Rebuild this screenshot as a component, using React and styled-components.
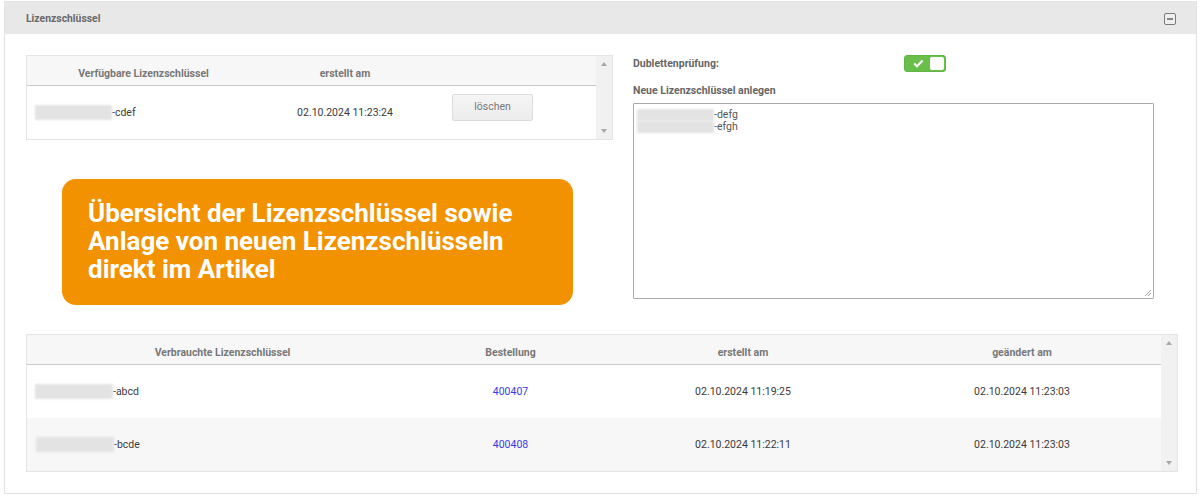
import React from "react";
import styled, { createGlobalStyle } from "styled-components";

const GlobalStyle = createGlobalStyle`
  html, body { margin: 0; padding: 0; background: #ffffff; }
  body { font-family: Roboto, "Liberation Sans", Arial, sans-serif; color: #333; }
`;

const Panel = styled.section`
  margin: 1px 3px 0 4px;
  border: 1px solid #e2e2e2;
  background: #fff;
`;

const PanelHeader = styled.header`
  height: 32px;
  background: #e8e8e8;
  display: flex;
  align-items: center;
  justify-content: space-between;
  padding: 0 20px 0 21px;
`;

const PanelTitle = styled.h2`
  margin: 0;
  font-size: 10.4px;
  font-weight: 700;
  color: #6a6a6a;
`;

const CollapseButton = styled.button`
  width: 12px;
  height: 12px;
  padding: 0;
  border: none;
  background: none;
  display: flex;
  margin-top: 1px;
`;

const PanelBody = styled.div`
  padding: 21px 20px 21px 21px;
`;

const TopRow = styled.div`
  display: flex;
  gap: 22px;
  align-items: flex-start;
`;

const LeftCol = styled.div`
  width: 585px;
  display: flex;
  flex-direction: column;
`;

const RightCol = styled.div`
  width: 521px;
  display: flex;
  flex-direction: column;
`;

const TableBox = styled.div`
  border: 1px solid #e4e4e4;
  display: flex;
  width: ${(p) => p.$width}px;
  margin-top: ${(p) => p.$mt || 0}px;
`;

const TableGrid = styled.div`
  flex: 1;
  display: grid;
  grid-template-columns: ${(p) => p.$cols};
  grid-auto-rows: 53px;
  grid-template-rows: 30px;
`;

const HeadCell = styled.div`
  box-sizing: border-box;
  background: #f7f7f7;
  border-bottom: 1px solid #c9c9c9;
  display: flex;
  align-items: center;
  justify-content: center;
  font-size: 10.5px;
  font-weight: 700;
  color: #777;
  padding-top: 5px;
`;

const Cell = styled.div`
  display: flex;
  align-items: center;
  justify-content: ${(p) => (p.$align === "left" ? "flex-start" : "center")};
  padding-left: ${(p) => p.$pl || 0}px;
  font-size: 10.5px;
  color: #3a3a3a;
  background: ${(p) => (p.$alt ? "#f7f7f7" : "#ffffff")};
`;

const BlurKey = styled.span`
  display: inline-block;
  width: ${(p) => p.$w || 77}px;
  height: ${(p) => p.$h || 15}px;
  background: #e3e3e3;
  filter: blur(1.2px);
  margin-left: ${(p) => p.$ml || 0}px;
`;

const OrderLink = styled.a`
  color: #3a3ae6;
  text-decoration: none;
  font-size: 10.5px;
`;

const DeleteButton = styled.button`
  width: 81px;
  height: 27px;
  margin-bottom: 10px;
  border: 1px solid #dcdcdc;
  border-radius: 2px;
  background: linear-gradient(#f5f5f5, #ececec);
  font-family: Roboto, "Liberation Sans", Arial, sans-serif;
  font-size: 10.5px;
  color: #777;
  padding: 0 0 2px;
`;

const ScrollTrack = styled.div`
  width: 16px;
  background: #f1f1f1;
  display: flex;
  flex-direction: column;
  justify-content: space-between;
  align-items: center;
  padding: 6px 0;
  box-sizing: border-box;
`;

const Arrow = styled.span`
  width: 0;
  height: 0;
  border-left: 3.5px solid transparent;
  border-right: 3.5px solid transparent;
  ${(p) =>
    p.$dir === "up"
      ? "border-bottom: 4px solid #a8a8a8;"
      : "border-top: 4px solid #a8a8a8;"}
`;

const Callout = styled.div`
  margin: 39px 0 0 36px;
  width: 511px;
  height: 126px;
  box-sizing: border-box;
  background: #f39200;
  border-radius: 14px;
  padding: 20px 20px 0 26px;
  color: #fff;
  font-size: 26px;
  font-weight: 700;
  line-height: 28px;
`;

const SettingRow = styled.div`
  display: grid;
  grid-template-columns: 271px auto;
  align-items: center;
  height: 17px;
`;

const Label = styled.div`
  font-size: 10.5px;
  font-weight: 700;
  color: #666;
  margin-top: ${(p) => p.$mt || 0}px;
`;

const Toggle = styled.div`
  width: 42px;
  height: 17px;
  box-sizing: border-box;
  border-radius: 3px;
  background: #6abf4b;
  border: 1px solid #62b544;
  display: flex;
  align-items: center;
  justify-content: space-between;
  padding: 0 1px 0 8px;
`;

const Knob = styled.span`
  width: 14px;
  height: 13px;
  background: #fff;
  border-radius: 2px;
`;

const TextBox = styled.div`
  position: relative;
  margin-top: 6px;
  height: 196px;
  box-sizing: border-box;
  border: 1px solid #aaaaaa;
  border-radius: 1px;
  padding: 5px 3px;
  font-size: 10.5px;
  line-height: 12px;
  color: #555;
`;

const TextLine = styled.div`
  display: flex;
  align-items: center;
  height: 12px;
`;

const ResizeGrip = styled.svg`
  position: absolute;
  right: 1px;
  bottom: 1px;
`;

const availableKeys = [{ suffix: "-cdef", date: "02.10.2024 11:23:24" }];

const usedKeys = [
  { suffix: "-abcd", order: "400407", created: "02.10.2024 11:19:25", changed: "02.10.2024 11:23:03", ml: 0 },
  { suffix: "-bcde", order: "400408", created: "02.10.2024 11:22:11", changed: "02.10.2024 11:23:03", ml: 1 },
];

function Scrollbar() {
  return (
    <ScrollTrack>
      <Arrow $dir="up" />
      <Arrow $dir="down" />
    </ScrollTrack>
  );
}

export default function App() {
  return (
    <>
      <GlobalStyle />
      <Panel>
        <PanelHeader>
          <PanelTitle>Lizenzschlüssel</PanelTitle>
          <CollapseButton aria-label="einklappen">
            <svg width="12" height="12" viewBox="0 0 12 12">
              <rect x="0.5" y="0.5" width="11" height="11" rx="1.5" fill="#efefef" stroke="#7a7a7a" />
              <rect x="3" y="5.2" width="6" height="1.6" fill="#6a6a6a" />
            </svg>
          </CollapseButton>
        </PanelHeader>
        <PanelBody>
          <TopRow>
            <LeftCol>
              <TableBox $width={585}>
                <TableGrid $cols="233px 170px 1fr">
                  <HeadCell>Verfügbare Lizenzschlüssel</HeadCell>
                  <HeadCell>erstellt am</HeadCell>
                  <HeadCell />
                  {availableKeys.map((k) => (
                    <React.Fragment key={k.suffix}>
                      <Cell $align="left" $pl={8}>
                        <BlurKey />
                        {k.suffix}
                      </Cell>
                      <Cell>{k.date}</Cell>
                      <Cell $align="left" $pl={22}>
                        <DeleteButton>löschen</DeleteButton>
                      </Cell>
                    </React.Fragment>
                  ))}
                </TableGrid>
                <Scrollbar />
              </TableBox>
              <Callout>
                Übersicht der Lizenzschlüssel sowie
                <br />
                Anlage von neuen Lizenzschlüsseln
                <br />
                direkt im Artikel
              </Callout>
            </LeftCol>
            <RightCol>
              <SettingRow>
                <Label>Dublettenprüfung:</Label>
                <Toggle>
                  <svg width="11" height="9" viewBox="0 0 11 9">
                    <path d="M1.2 4.6 L4 7.2 L9.6 1.6" fill="none" stroke="#fff" strokeWidth="2.1" />
                  </svg>
                  <Knob />
                </Toggle>
              </SettingRow>
              <Label $mt={12}>Neue Lizenzschlüssel anlegen</Label>
              <TextBox>
                <TextLine>
                  <BlurKey $w={77} $h={12} />
                  -defg
                </TextLine>
                <TextLine>
                  <BlurKey $w={77} $h={12} />
                  -efgh
                </TextLine>
                <ResizeGrip width="9" height="9" viewBox="0 0 9 9">
                  <path d="M8 2 L2 8 M8 5 L5 8" stroke="#999" strokeWidth="1" />
                </ResizeGrip>
              </TextBox>
            </RightCol>
          </TopRow>
          <TableBox $width={1150} $mt={29}>
            <TableGrid $cols="391px 185px 280px 1fr">
              <HeadCell>Verbrauchte Lizenzschlüssel</HeadCell>
              <HeadCell>Bestellung</HeadCell>
              <HeadCell>erstellt am</HeadCell>
              <HeadCell>geändert am</HeadCell>
              {usedKeys.map((k, i) => (
                <React.Fragment key={k.suffix}>
                  <Cell $align="left" $pl={8} $alt={i % 2 === 1}>
                    <BlurKey $ml={k.ml} $w={78} />
                    {k.suffix}
                  </Cell>
                  <Cell $alt={i % 2 === 1}>
                    <OrderLink href="#">{k.order}</OrderLink>
                  </Cell>
                  <Cell $alt={i % 2 === 1}>{k.created}</Cell>
                  <Cell $alt={i % 2 === 1}>{k.changed}</Cell>
                </React.Fragment>
              ))}
            </TableGrid>
            <Scrollbar />
          </TableBox>
        </PanelBody>
      </Panel>
    </>
  );
}
